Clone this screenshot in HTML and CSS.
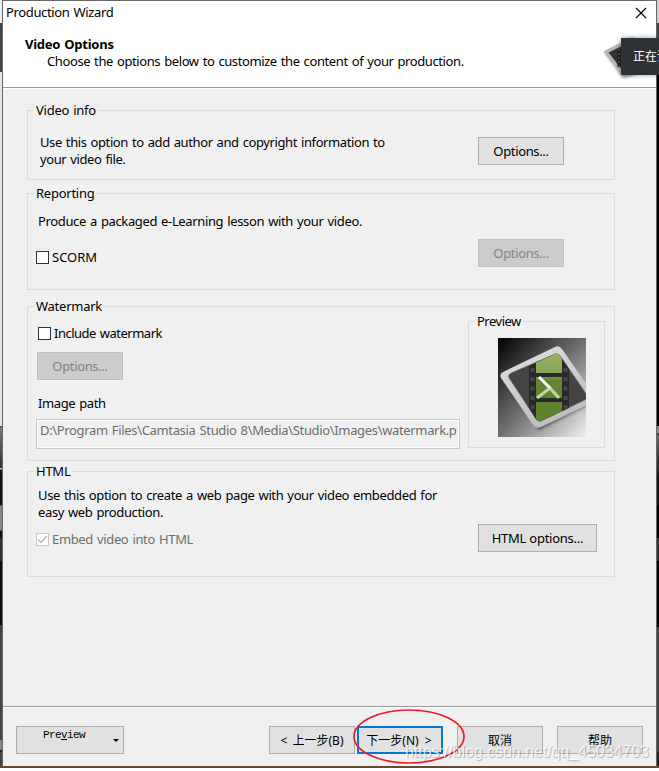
FILE: index.html
```html
<!DOCTYPE html>
<html lang="en">
<head>
<meta charset="utf-8">
<title>Production Wizard</title>
<link rel="stylesheet" href="styles.css">
</head>
<body>
<div class="desktop">
<main class="window">
  <div class="titlebar"><span class="t-title">Production Wizard</span>
    <svg class="close" width="12" height="12" viewBox="0 0 12 12"><path d="M1 1L11 11M11 1L1 11" stroke="#000" stroke-width="1.1"/></svg>
  </div>
  <header class="header">
    <div>
      <h1>Video Options</h1>
      <p class="t-sub">Choose the options below to customize the content of your production.</p>
    </div>
    <svg class="badge" width="56" height="52" viewBox="0 0 56 52">
      <defs><filter id="soft"><feGaussianBlur stdDeviation="1.5"/></filter></defs>
      <path d="M6 19L34 4L56 36L24 44Z" fill="#999" filter="url(#soft)"/>
      <path d="M7 18L33 5L56 34L24 40Z" fill="#333" stroke="#b5b5b5" stroke-width="3.500" stroke-linejoin="round"/>
      <path d="M20 15V33" stroke="#1c1c1c" stroke-width="3"/><path d="M20 15V33" stroke="#444" stroke-width="2" stroke-dasharray="2 2"/>
    </svg>
    <div class="toast">正在课</div>
  </header>
  <section class="content">
    <fieldset class="info"><legend>Video info</legend>
      <p>Use this option to add author and copyright information to<br>your video file.</p>
      <button class="std">Options...</button>
    </fieldset>
    <fieldset class="reporting"><legend>Reporting</legend>
      <div><p>Produce a packaged e-Learning lesson with your video.</p>
      <label class="scorm"><i class="box"></i><span>SCORM</span></label></div>
      <button class="std" disabled>Options...</button>
    </fieldset>
    <fieldset class="watermark"><legend>Watermark</legend>
      <div class="wm">
        <label class="include"><i class="box"></i><span>Include watermark</span></label>
        <button class="std" disabled>Options...</button>
        <p class="t-path">Image path</p>
        <div class="field"><span>D:\Program Files\Camtasia Studio 8\Media\Studio\Images\watermark.p</span></div>
      </div>
      <fieldset class="preview"><legend>Preview</legend>
        <svg width="88" height="99" viewBox="0 0 88 99">
          <defs>
            <linearGradient id="bg" x1="0" y1="0" x2="1" y2="1"><stop offset="0" stop-color="#000"/><stop offset=".5" stop-color="#707070"/><stop offset="1" stop-color="#eee"/></linearGradient>
            <linearGradient id="fr" x1="0" y1="0" x2=".5" y2="1"><stop offset="0" stop-color="#e0e0e0"/><stop offset="1" stop-color="#bdbdbd"/></linearGradient>
            <linearGradient id="gr" gradientUnits="userSpaceOnUse" x1="0" y1="14" x2="0" y2="86"><stop offset="0" stop-color="#9ab565"/><stop offset=".3" stop-color="#84a552"/><stop offset=".4" stop-color="#64852f"/><stop offset="1" stop-color="#5b822c"/></linearGradient>
            <clipPath id="in"><path d="M12 40Q10 37 14 36L57 16Q60 15 62 18L88 56V62L43 83Q40 84 38 81Z"/></clipPath>
            <filter id="sh"><feGaussianBlur stdDeviation="1.5"/></filter>
          </defs>
          <path d="M0 0H88V99H0Z" fill="url(#bg)"/>
          <path d="M4 42L60 13L92 59V66L41 92Z" fill="#333" opacity=".7" filter="url(#sh)"/>
          <path d="M3 40Q1 36 5 34L57 9Q61 7 64 11L96 57V64L43 89Q38 91 35 87Z" fill="url(#fr)"/>
          <path d="M11 40Q9 37 13 35L57 16Q60 15 63 19L91 60L43 83Q40 84 38 81Z" fill="#444" stroke="#777" stroke-width=".7"/>
          <g clip-path="url(#in)">
            <path d="M31 0H71V99H31Z" fill="#292929"/>
            <path d="M34.500 30V99M67.500 30V99" stroke="#484848" stroke-width="4" stroke-dasharray="4 5.300"/>
            <path d="M38 10H64V35H38ZM38 39H64V60H38ZM38 64H64V90H38Z" fill="url(#gr)"/>
          </g>
          <path d="M51 49L61 60M52 50L39 60" stroke="#c5d4a5" stroke-width="3" fill="none"/>
          <path d="M41 39L52 50" stroke="#fff" stroke-width="3"/>
        </svg>
      </fieldset>
    </fieldset>
    <fieldset class="html"><legend>HTML</legend>
      <div><p>Use this option to create a web page with your video embedded for<br>easy web production.</p>
      <label class="embed"><i class="box"><svg width="11" height="11" viewBox="0 0 11 11"><path d="M1 5.500L4 8.500L10 2" fill="none" stroke="#b5b5b5" stroke-width="1.300"/></svg></i><span>Embed video into HTML</span></label></div>
      <button class="wide">HTML options...</button>
    </fieldset>
  </section>
  <footer>
    <button class="menu"><span>Pre<u>v</u>iew</span><i></i></button>
    <button class="back">&lt; 上一步(B)</button>
    <button class="next">下一步(N) &nbsp;&gt;</button>
    <button class="cancel">取消</button>
    <button class="help">帮助</button>
    <svg class="ring" width="114" height="60" viewBox="0 0 114 60"><ellipse cx="57" cy="28.500" rx="55" ry="26.500" fill="none" stroke="#ec1c24" stroke-width="1.700"/></svg>
    <span class="mark">https://blog.csdn.net/qq_45034703</span>
  </footer>
</main>
</div>
</body>
</html>
```
FILE: styles.css
```css
*{box-sizing:border-box}
body{margin:0;background:#fff;font:13px/17px "Noto Sans","Noto Sans CJK SC",sans-serif;letter-spacing:-.4px;word-spacing:1px;color:#000}
h1,p{margin:0;font-size:13px}
h1{letter-spacing:-.25px}
span,legend,p,h1,button{white-space:nowrap}
.desktop{width:659px;height:768px;padding:0 2px 2px;overflow:hidden;
  background:linear-gradient(#654a32,#654a32) 0 766px/659px 2px no-repeat,
    linear-gradient(#eee 0 23px,#444 23px 72px,#e5e5e5 72px 426px,#444 426px,#777 428px,#333 468px,#ccc 468px 469px,#111 470px 505px,#888 506px 530px,#111 531px 538px,#333 538px 561px,#0c0c0c 561px 625px,#444 625px 740px,#888 740px 750px,#222 750px 752px,#444 752px) 0 0/3px 766px no-repeat,
    linear-gradient(#ccc 0 23px,#444 23px 75px,#000 75px 426px,#888 426px 433px,#222 434px,#666 436px,#111 480px 506px,#000 506px 538px,#333 538px 561px,#080808 561px 627px,#444 627px 752px,#222 752px) 656px 0/3px 766px no-repeat}
.window{width:655px;height:766px;border:1px solid #666;border-bottom:0;background:#f0f0f0}
.titlebar{height:24px;background:#fff;display:flex;justify-content:space-between;padding:3px 9px 0 3px}
.t-title{letter-spacing:-.35px}
.close{margin-top:3px}
.header{height:63px;background:#fff;border-bottom:1px solid #999;padding:11px 0 0 22px;position:relative}
.header p{padding-left:22px}
.badge{position:absolute;left:596px;top:9px}
.toast{position:absolute;left:618px;top:13px;width:38px;height:37px;background:#2d3236;color:#fff;padding:10px 0 0 12px;font-size:12px;letter-spacing:0;overflow:hidden;white-space:nowrap;box-shadow:0 0 5px #0006}
.content{height:618px;border-top:1px solid #fff;padding:13px 41px 0 24px}
fieldset{margin:0;border:1px solid #dcdcdc;padding:0;display:flex;justify-content:space-between;min-width:0}
legend{padding:0 2px;height:17px;letter-spacing:-.25px}
button{font:inherit;letter-spacing:-.35px;border:1px solid #adadad;background:#e1e1e1;padding:0;color:#000;height:28px}
button:disabled{background:#ccc;border-color:#bfbfbf;color:#838383}
.std{width:86px;letter-spacing:-.35px}
.wide{width:119px;letter-spacing:-.25px}
.info{height:78px;padding:15px 50px 0 12px}
.info legend{margin-left:-6px}
.info .std{margin-top:3px}
.reporting{height:105px;margin-top:5px;padding:11px 50px 0 10px}
.reporting p{letter-spacing:-.36px}
.reporting legend,.html legend{margin-left:-4px}
.reporting .std{margin-top:26px}
label{display:flex;align-items:center;gap:3px}
.box{width:13px;height:13px;border:1px solid #333;background:#fff;display:flex}
.scorm{margin:19px 0 0 -2px;letter-spacing:0}
.watermark{height:163px;margin-top:8px;padding:10px 9px 0 9px}
.watermark>legend{margin-left:-3px}
.include{margin:0 0 10px 1px;letter-spacing:-.5px}
.wm .std{display:block}
.t-path{margin:15px 0 7px 1px;letter-spacing:-.4px}
.field{width:424px;height:30px;border:1px solid #c8c8c8;box-shadow:inset 0 0 0 1px #fff;padding:2px 0 0 3px;color:#6d6d6d;overflow:hidden;margin-left:-1px}
.field span{letter-spacing:-.34px}
.preview{width:137px;height:135px;display:block;margin-top:-12px;padding:8px 0 0 29px}
.preview>legend{margin-left:-23px;letter-spacing:-.5px}
.preview svg{display:block}
.html{height:114px;margin-top:2px;padding:7px 17px 0 10px}
.html p{letter-spacing:-.37px}
.html .wide{margin-top:37px}
.embed{margin:10px 0 0 -2px;color:#6d6d6d;letter-spacing:-.35px}
.embed .box{border-color:#c8c8c8}
footer{height:60px;border-top:1px solid #999;box-shadow:inset 0 1px #fff;display:flex;padding:19px 0 0 13px;position:relative}
.menu{width:108px;margin-right:145px;font:11px/14px "Liberation Mono",monospace;letter-spacing:-.6px;display:flex;padding:1px 4px 0 26px;justify-content:space-between}
.menu i{border:3px solid transparent;border-top-color:#000;margin-top:11px}
.back{width:86px}
.next{width:86px;border:2px solid #0078d7;margin-left:2px}
.cancel{width:86px;margin-left:14px}
.help{width:86px;margin-left:14px}
.back,.next,.cancel,.help{font-size:12px;letter-spacing:0}
.back{word-spacing:2px}
.next{padding-right:2px}
.ring{position:absolute;left:349px;top:1px}
.mark{position:absolute;left:402px;top:35px;font:16px/20px "Liberation Sans",sans-serif;letter-spacing:-.05px;color:#ffffffc0;text-shadow:1px 1px 1px #0004}
```
